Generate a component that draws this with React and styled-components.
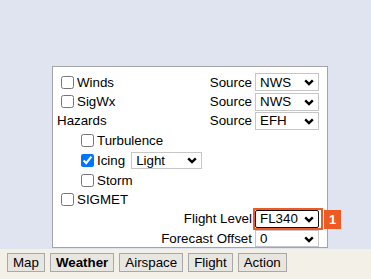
import React from 'react';
import styled, { createGlobalStyle } from 'styled-components';

const GlobalStyle = createGlobalStyle`
  html, body {
    margin: 0;
    padding: 0;
  }
  body {
    font-family: "Liberation Sans", Arial, sans-serif;
    font-size: 13.33px;
    color: #000;
  }
`;

const Page = styled.div`
  width: 371px;
  height: 279px;
  display: flex;
  flex-direction: column;
  overflow: hidden;
`;

const MapArea = styled.div`
  flex: 1;
  background-color: #e0e4f1;
  padding: 66px 0 0 52px;
  box-sizing: border-box;
`;

const Panel = styled.div`
  position: relative;
  width: 276px;
  height: 182px;
  box-sizing: border-box;
  background-color: #fff;
  border: 1px solid #a4a4a4;
  padding: 5px 8px 0 4px;
`;

const Row = styled.div`
  display: flex;
  align-items: center;
  height: ${p => p.h || 20}px;
  padding-left: ${p => p.indent || 0}px;
`;

const Spacer = styled.div`
  flex: 1;
`;

const Check = styled.input.attrs({ type: 'checkbox' })`
  width: 13px;
  height: 13px;
  margin: 0 3px 0 4px;
  accent-color: #0075ff;
`;

const Label = styled.label`
  display: flex;
  align-items: center;
  white-space: nowrap;
`;

const Text = styled.span`
  white-space: nowrap;
`;

const SelectBox = styled.div`
  position: relative;
  width: ${p => p.w || 64}px;
  height: ${p => p.h || 18}px;
  margin-left: ${p => p.ml ?? 3}px;
  box-sizing: border-box;
`;

const NativeSelect = styled.select`
  appearance: none;
  width: 100%;
  height: 100%;
  box-sizing: border-box;
  border: 1px solid ${p => (p.$focused ? '#101010' : '#c6c6c6')};
  border-radius: ${p => (p.$focused ? '2px' : '0')};
  background: #fff;
  font-family: "Liberation Sans", Arial, sans-serif;
  font-size: 13.33px;
  color: #000;
  padding: 0 0 0 4px;
  outline: none;
`;

const Chevron = styled.svg`
  position: absolute;
  right: 5px;
  top: 50%;
  width: 10px;
  height: 7px;
  margin-top: -3px;
  pointer-events: none;
`;

const Highlight = styled.div`
  position: relative;
  margin-left: 1px;
  margin-right: -4px;
  padding: 0 2px 0 0;
  border: 2px solid #ef5a24;
  display: flex;
`;

const Badge = styled.div`
  position: absolute;
  left: 69px;
  top: 0;
  width: 17px;
  height: 19px;
  background-color: #ef5a24;
  color: #fff;
  font-weight: bold;
  font-size: 13px;
  display: flex;
  align-items: center;
  justify-content: center;
`;

const BottomBar = styled.div`
  height: 30px;
  background-color: #f3f0e7;
  display: flex;
  align-items: flex-start;
  gap: 5px;
  padding: 4px 0 0 7px;
  box-sizing: border-box;
`;

const TabButton = styled.button`
  height: 19px;
  box-sizing: border-box;
  padding: 0 5px;
  border: 1px solid #a8a8a8;
  background-color: #e8e6e0;
  font-family: "Liberation Sans", Arial, sans-serif;
  font-size: 13.33px;
  font-weight: ${p => (p.$active ? 'bold' : 'normal')};
  color: #000;
  line-height: 17px;
`;

const Select = ({ value, w, h, ml, focused }) => (
  <SelectBox w={w} h={h} ml={ml}>
    <NativeSelect $focused={focused} defaultValue={value}>
      <option>{value}</option>
    </NativeSelect>
    <Chevron viewBox="0 0 10 7">
      <path d="M1.2 1.3 L5 5 L8.8 1.3" fill="none" stroke="#000" strokeWidth="2.4" />
    </Chevron>
  </SelectBox>
);

const SourceRow = ({ children, value, h }) => (
  <Row h={h}>
    {children}
    <Spacer />
    <Text>Source</Text>
    <Select value={value} />
  </Row>
);

export default function App() {
  return (
    <Page>
      <GlobalStyle />
      <MapArea>
        <Panel>
          <SourceRow value="NWS" h={20}>
            <Label><Check />Winds</Label>
          </SourceRow>
          <SourceRow value="NWS" h={19}>
            <Label><Check />SigWx</Label>
          </SourceRow>
          <SourceRow value="EFH" h={19}>
            <Text>Hazards</Text>
          </SourceRow>
          <Row h={20} indent={20}>
            <Label><Check />Turbulence</Label>
          </Row>
          <Row h={20} indent={20}>
            <Label><Check defaultChecked />Icing</Label>
            <Select value="Light" w={71} h={17} ml={6} />
          </Row>
          <Row h={21} indent={20}>
            <Label><Check />Storm</Label>
          </Row>
          <Row h={17}>
            <Label><Check />SIGMET</Label>
          </Row>
          <Row h={21}>
            <Spacer />
            <Text>Flight Level</Text>
            <Highlight>
              <Select value="FL340" ml={0} focused />
              <Badge>1</Badge>
            </Highlight>
          </Row>
          <Row h={19}>
            <Spacer />
            <Text>Forecast Offset</Text>
            <Select value="0" h={17} />
          </Row>
        </Panel>
      </MapArea>
      <BottomBar>
        <TabButton>Map</TabButton>
        <TabButton $active>Weather</TabButton>
        <TabButton>Airspace</TabButton>
        <TabButton>Flight</TabButton>
        <TabButton>Action</TabButton>
      </BottomBar>
    </Page>
  );
}
